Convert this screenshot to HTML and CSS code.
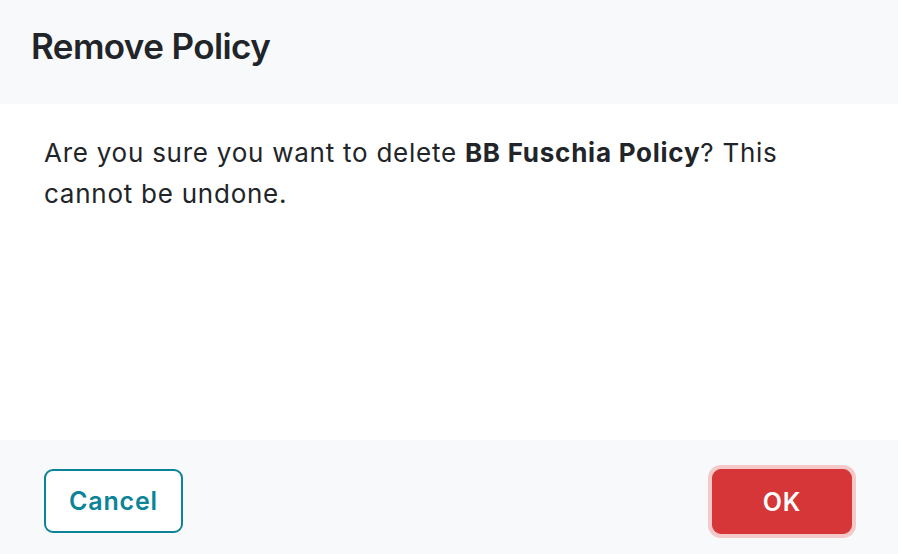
FILE: index.html
```html
<!DOCTYPE html>
<html>
<head>
    <title>Remove Policy</title>
    <meta charset="UTF-8">
    <link rel="stylesheet" href="styles.css">
</head>
<body>
    <div class="modal">
        <div class="modal-header">
            <div class="modal-title">Remove Policy</div>
        </div>

        <div class="modal-body">
            <p class="message">Are you sure you want to delete <strong>BB Fuschia Policy</strong>? This cannot be undone.</p>
        </div>

        <div class="modal-footer">
            <button class="btn btn-cancel">Cancel</button>
            <button class="btn btn-ok">OK</button>
        </div>
    </div>
</body>
</html>
```

FILE: styles.css
```css
html, body {
    height: 100%;
}

body {
    font-family: Inter, 'Noto Sans', sans-serif;
    margin: 0;
    background: #ffffff;
    color: #212529;
}

.modal {
    display: flex;
    flex-direction: column;
    height: 100%;
}

.modal-header {
    background: #f8f9fa;
    height: 104px;
    padding: 0 31px;
    display: flex;
    align-items: center;
    box-sizing: border-box;
}

.modal-title {
    font-size: 35px;
    font-weight: 600;
    letter-spacing: -0.6px;
    margin-top: -12px;
}

.modal-body {
    flex: 1;
    padding: 28px 44px;
}

.message {
    margin: 0;
    font-size: 26px;
    line-height: 41px;
    letter-spacing: 0.75px;
    max-width: 790px;
}

.message strong {
    font-weight: 700;
}

.modal-footer {
    background: #f8f9fa;
    height: 114px;
    padding: 29px 46px 0 44px;
    display: flex;
    justify-content: space-between;
    align-items: flex-start;
    box-sizing: border-box;
}

.btn {
    font-family: inherit;
    font-size: 25px;
    font-weight: 600;
    letter-spacing: 0.8px;
    border-radius: 9px;
    cursor: pointer;
}

.btn-cancel {
    width: 139px;
    height: 64px;
    background: #ffffff;
    color: #0b8399;
    border: 2px solid #0b8399;
}

.btn-ok {
    width: 140px;
    height: 65px;
    background: #d63638;
    color: #ffffff;
    border: 1px solid #d63638;
    box-shadow: 0 0 0 4px #f5c9c9;
}
```
